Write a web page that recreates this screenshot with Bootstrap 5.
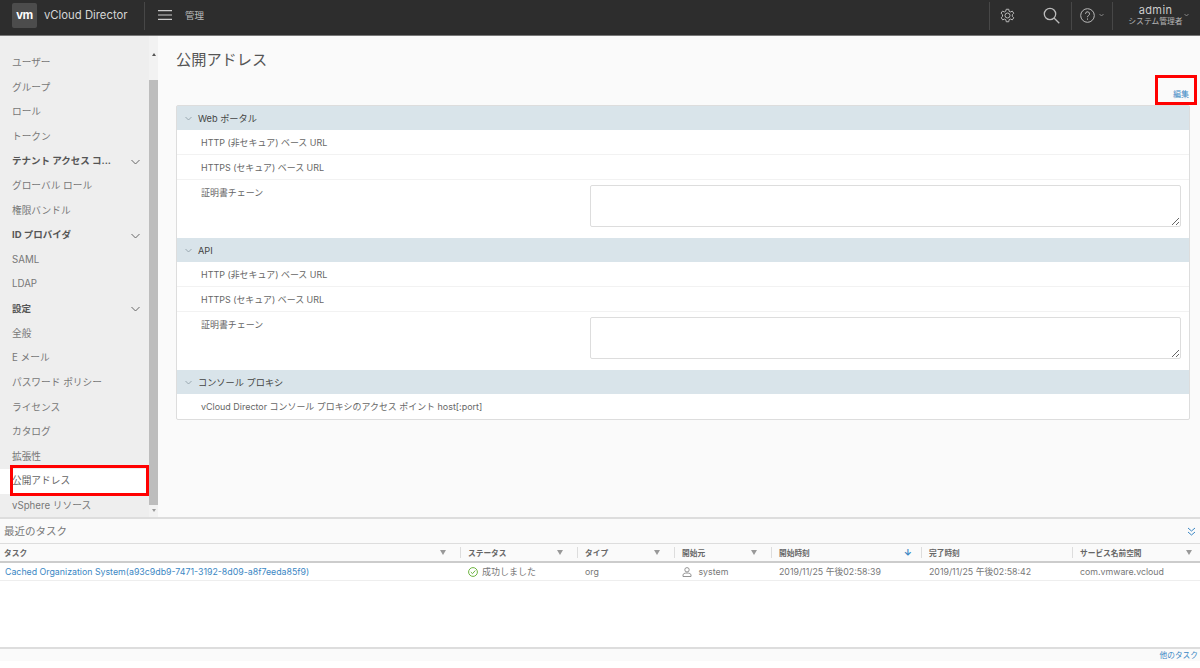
<!DOCTYPE html>
<html lang="ja">
<head>
<meta charset="utf-8">
<title>公開アドレス</title>
<link href="https://cdn.jsdelivr.net/npm/bootstrap@5.3.0/dist/css/bootstrap.min.css" rel="stylesheet">
<style>
html,body{height:668px;overflow:hidden;background:#fff}
body{font-family:Inter,"Noto Sans CJK JP",sans-serif;font-size:10px;color:#666}
.app-head{height:36px;background:#2d2d2d;border-bottom:1px solid #777;color:#ccc;flex:none}
.vm-logo{width:25px;height:25px;margin:3px 7px 0 12px;background:#4c4c4c;border-radius:2px;color:#fff;font:700 12px/25px "Liberation Sans",sans-serif;text-align:center;letter-spacing:-.3px}
.brand-name{width:100px;font-size:11.3px;line-height:30px;color:#d6d6d6;white-space:nowrap}
.head-sep{width:1px;height:28px;margin-top:2px;background:#474747}
.burger{margin:10px 13px 0 13px;width:14px;height:10px;flex:none}
.crumb{line-height:31px;font-size:9.5px;color:#bbb}
.ic-slot{height:30px;display:flex;align-items:center;justify-content:center}
.slot-gear{width:34px}
.slot-find{width:47px;padding-left:8px}
.slot-help{width:40px}
.user-box{width:87px;text-align:center;position:relative;padding-right:2px}
.user-name{font-size:11px;line-height:12px;margin-top:4px;letter-spacing:.4px;color:#ccc}
.user-role{font-size:7.8px;line-height:11px;color:#b5b5b5}
.user-caret{right:11px;top:13px}
.stage{height:481px;flex:none}
.side-wrap{width:158px;background:#eee;flex:none}
.side-list{width:149px;padding-top:15px}
.side-row{height:24.62px;line-height:24.62px;padding-left:12px;padding-right:9px;font-size:9.7px;color:#777;white-space:nowrap;position:relative}
.side-row.grp{font-weight:700;color:#555;font-size:9.5px}
.side-row.on{background:#fff;color:#666}
.red-mark{position:absolute;border:3px solid #f00;pointer-events:none}
.mark-side{left:10px;right:0;top:-4px;bottom:-2px}
.mark-edit{left:-18px;width:42px;top:-13px;height:30px}
.scroll-col{width:9px;background:#f2f2f2;flex:none}
.thumb{height:425px;background:#bdbdbd;margin-top:44px}
.tri-up,.tri-dn{width:0;height:0;border-left:2.5px solid transparent;border-right:2.5px solid transparent;margin:0 auto}
.tri-up{border-bottom:3px solid #555;margin-top:17px;margin-bottom:-20px}
.tri-dn{border-top:3px solid #999;margin-top:4px}
.main-pane{background:#fafafa;padding:0 10px 0 18px;min-width:0}
.page-head{font-size:15.2px;line-height:22px;padding-top:13px;color:#555;height:38px}
.edit-line{height:31px;text-align:right;font-size:8px;line-height:12px;padding-top:14px;padding-right:1px;color:#3b87c4}
.edit-anchor{position:relative;display:inline-block;color:#3b87c4}
.addr-panel{border:1px solid #ddd;background:#fff;border-radius:2px;width:1014px}
.sec-head{height:24px;line-height:24px;background:#d9e4ea;font-size:9.2px;font-weight:400;color:#444;display:flex;align-items:center;padding-top:1px}
.sec-head svg{margin:0 6px 0 8px}
.sec-row{height:25px;line-height:26px;padding-left:24px;font-size:8.95px;color:#666;border-bottom:1px solid #f2f2f2}
.sec-row:last-child{border-bottom:0}
.sec-tall{height:58px;display:flex;border-bottom:0;padding-left:24px}
.sec-lab{width:389px;flex:none}
.addr-area{width:591px;height:42px;margin-top:5px;border:1px solid #ddd;border-radius:2px;display:block;background:#fff}
.task-zone{border-top:2px solid #ddd;height:144px;background:#fafafa;flex:none}
.task-title{height:24px;line-height:25px;padding-left:4px;font-size:10.5px;color:#777;position:relative;display:flex;justify-content:space-between}
.task-table{table-layout:fixed;width:1200px;margin:0;--bs-table-bg:transparent;font-size:8.8px;border-collapse:collapse}
.task-table th{height:18px;padding:0 8px;font-size:7.7px;line-height:15px;font-weight:700;color:#666;background:#fafafa;border-top:1px solid #ddd;border-bottom:2px solid #ccc;white-space:nowrap;position:relative}
.task-table th+th::before{content:"";position:absolute;left:0;top:3px;bottom:3px;width:1px;background:#ddd}
.task-table td{height:18px;padding:0 8px;line-height:17px;color:#777;background:#fff;border-bottom:1px solid #eee;white-space:nowrap;overflow:hidden}
.task-table td:first-child,.task-table th:first-child{padding-left:4px}
.funnel{position:absolute;right:14px;top:6px;width:0;height:0;border-left:3px solid transparent;border-right:3px solid transparent;border-top:5px solid #999}
.funnel-end{right:8px}
.task-link{color:#3b87c4;text-decoration:none;margin-left:1px}
.task-blank{height:68px;background:#fff;border-bottom:2px solid #ddd}
.task-foot{height:12px;text-align:right;font-size:7.7px;line-height:14px;padding-right:2px;color:#3b87c4}
.sort-dn{position:absolute;right:9px;top:1px;color:#3b87c4;font-size:9px}
.cell-ic{vertical-align:-2px}
.ok-text{font-size:9px}
</style>
</head>
<body class="d-flex flex-column">
<header class="app-head d-flex">
  <div class="vm-logo">vm</div>
  <div class="brand-name">vCloud Director</div>
  <div class="head-sep"></div>
  <svg class="burger" viewBox="0 0 14 10"><path d="M0 .7h14M0 5h14M0 9.300h14" stroke="#ccc" stroke-width="1.200" fill="none"/></svg>
  <div class="crumb">管理</div>
  <div class="ms-auto d-flex">
    <div class="head-sep"></div>
    <div class="ic-slot slot-gear">
      <svg width="15" height="15" viewBox="0 0 36 36" fill="none" stroke="#bbb" stroke-width="2.400"><path d="M15 3h6l1 5 3 1.500 4.500-2 3.500 5-3.500 3.500v4l3.500 3.500-3.500 5-4.500-2-3 1.500-1 5h-6l-1-5-3-1.500-4.500 2-3.500-5L6 20v-4L2.500 12.500l3.500-5 4.500 2 3-1.500z"/><circle cx="18" cy="18" r="6"/></svg>
    </div>
    <div class="ic-slot slot-find">
      <svg width="17" height="17" viewBox="0 0 17 17" fill="none" stroke="#bbb" stroke-width="1.300"><circle cx="7" cy="7" r="5.700"/><path d="M11 11l5.300 5.300"/></svg>
    </div>
    <div class="head-sep"></div>
    <div class="ic-slot gap-1 slot-help">
      <svg width="15" height="15" viewBox="0 0 15 15" fill="none" stroke="#bbb" stroke-width="1"><circle cx="7.500" cy="7.500" r="6.800"/><path d="M5.500 5.800a2 2 0 1 1 3 1.700c-.7.400-1 .8-1 1.700M7.500 10.500v1.200"/></svg>
      <svg width="5" height="4" viewBox="0 0 5 4" fill="none" stroke="#999" stroke-width=".8"><path d="M.5 1l2 2 2-2"/></svg>
    </div>
    <div class="head-sep"></div>
    <div class="user-box">
      <div class="user-name">admin</div>
      <div class="user-role">システム管理者</div>
      <svg class="position-absolute user-caret" width="5" height="4" viewBox="0 0 5 4" fill="none" stroke="#999" stroke-width=".8"><path d="M.5 1l2 2 2-2"/></svg>
    </div>
  </div>
</header>
<div class="stage d-flex">
  <nav class="side-wrap d-flex">
    <div class="side-list">
      <div class="side-row">ユーザー</div>
      <div class="side-row">グループ</div>
      <div class="side-row">ロール</div>
      <div class="side-row">トークン</div>
      <div class="side-row grp d-flex justify-content-between align-items-center"><span>テナント アクセス コ...</span><svg width="9" height="6" viewBox="0 0 9 6" fill="none" stroke="#666" stroke-width="1"><path d="M.5 1l4 4 4-4"/></svg></div>
      <div class="side-row">グローバル ロール</div>
      <div class="side-row">権限バンドル</div>
      <div class="side-row grp d-flex justify-content-between align-items-center"><span>ID プロバイダ</span><svg width="9" height="6" viewBox="0 0 9 6" fill="none" stroke="#666" stroke-width="1"><path d="M.5 1l4 4 4-4"/></svg></div>
      <div class="side-row">SAML</div>
      <div class="side-row">LDAP</div>
      <div class="side-row grp d-flex justify-content-between align-items-center"><span>設定</span><svg width="9" height="6" viewBox="0 0 9 6" fill="none" stroke="#666" stroke-width="1"><path d="M.5 1l4 4 4-4"/></svg></div>
      <div class="side-row">全般</div>
      <div class="side-row">E メール</div>
      <div class="side-row">パスワード ポリシー</div>
      <div class="side-row">ライセンス</div>
      <div class="side-row">カタログ</div>
      <div class="side-row">拡張性</div>
      <div class="side-row on">公開アドレス<span class="red-mark mark-side"></span></div>
      <div class="side-row">vSphere リソース</div>
    </div>
    <div class="scroll-col">
      <div class="tri-up"></div>
      <div class="thumb"></div>
      <div class="tri-dn"></div>
    </div>
  </nav>
  <main class="main-pane flex-grow-1">
    <div class="page-head">公開アドレス</div>
    <div class="edit-line"><span class="edit-anchor">編集<span class="red-mark mark-edit"></span></span></div>
    <div class="addr-panel">
      <div class="sec-head"><svg width="7" height="5" viewBox="0 0 7 5" fill="none" stroke="#8a9aa3" stroke-width=".8"><path d="M.5 1l3 3 3-3"/></svg><span>Web ポータル</span></div>
      <div class="sec-row">HTTP (非セキュア) ベース URL</div>
      <div class="sec-row">HTTPS (セキュア) ベース URL</div>
      <div class="sec-row sec-tall"><div class="sec-lab">証明書チェーン</div><textarea class="addr-area" aria-label="証明書チェーン"></textarea></div>
      <div class="sec-head"><svg width="7" height="5" viewBox="0 0 7 5" fill="none" stroke="#8a9aa3" stroke-width=".8"><path d="M.5 1l3 3 3-3"/></svg><span>API</span></div>
      <div class="sec-row">HTTP (非セキュア) ベース URL</div>
      <div class="sec-row">HTTPS (セキュア) ベース URL</div>
      <div class="sec-row sec-tall"><div class="sec-lab">証明書チェーン</div><textarea class="addr-area" aria-label="証明書チェーン"></textarea></div>
      <div class="sec-head"><svg width="7" height="5" viewBox="0 0 7 5" fill="none" stroke="#8a9aa3" stroke-width=".8"><path d="M.5 1l3 3 3-3"/></svg><span>コンソール プロキシ</span></div>
      <div class="sec-row">vCloud Director コンソール プロキシのアクセス ポイント host[:port]</div>
    </div>
  </main>
</div>
<section class="task-zone">
  <div class="task-title"><span>最近のタスク</span>
    <svg class="me-1 mt-2" width="9" height="9" viewBox="0 0 9 9" fill="none" stroke="#3b87c4" stroke-width="1"><path d="M1 1l3.500 3 3.500-3M1 5l3.500 3 3.500-3"/></svg>
  </div>
  <table class="table task-table">
    <colgroup><col style="width:460px"><col style="width:117px"><col style="width:97px"><col style="width:97px"><col style="width:150px"><col style="width:151px"><col style="width:128px"></colgroup>
    <thead><tr>
      <th>タスク<i class="funnel"></i></th>
      <th>ステータス<i class="funnel"></i></th>
      <th>タイプ<i class="funnel"></i></th>
      <th>開始元<i class="funnel"></i></th>
      <th>開始時刻<span class="sort-dn">↓</span></th>
      <th>完了時刻</th>
      <th>サービス名前空間<i class="funnel funnel-end"></i></th>
    </tr></thead>
    <tbody><tr>
      <td><a class="task-link" href="#">Cached Organization System(a93c9db9-7471-3192-8d09-a8f7eeda85f9)</a></td>
      <td><svg class="me-1 cell-ic" width="10" height="10" viewBox="0 0 10 10" fill="none" stroke="#6db33f" stroke-width="1"><circle cx="5" cy="5" r="4.400"/><path d="M2.800 5l1.700 1.700L7.300 3.500"/></svg><span class="ok-text">成功しました</span></td>
      <td>org</td>
      <td><svg class="me-1 cell-ic" width="10" height="10" viewBox="0 0 10 10" fill="none" stroke="#888" stroke-width=".9"><circle cx="5" cy="2.800" r="2.200"/><path d="M1 9.500V8c0-1.200 1.500-2 4-2s4 .8 4 2v1.500z"/></svg> system</td>
      <td>2019/11/25 午後02:58:39</td>
      <td>2019/11/25 午後02:58:42</td>
      <td>com.vmware.vcloud</td>
    </tr></tbody>
  </table>
  <div class="task-blank"></div>
  <div class="task-foot">他のタスク</div>
</section>
</body>
</html>
